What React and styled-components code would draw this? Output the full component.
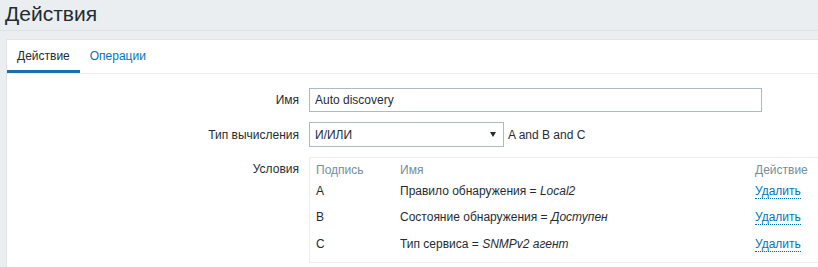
import React from "react";
import styled, { createGlobalStyle } from "styled-components";

const Global = createGlobalStyle`
  html, body { margin: 0; padding: 0; overflow: hidden; }
  body {
    background: #ebeef0;
    font-family: "Liberation Sans", Arial, sans-serif;
    font-size: 12px;
    color: #1f2c33;
  }
`;

const Page = styled.div`
  width: 818px;
  height: 267px;
  overflow: hidden;
`;

const Header = styled.header`
  height: 31px;
  border-bottom: 1px solid #dde2e5;
  padding-left: 5px;
  box-sizing: border-box;
`;

const Title = styled.h1`
  margin: 0;
  font-size: 21px;
  font-weight: normal;
  line-height: 28px;
  color: #1f2c33;
`;

const Panel = styled.section`
  margin: 8px 0 0 6px;
  background: #fff;
  border: 1px solid #dfe4e7;
  border-right: none;
  height: 240px;
  overflow: hidden;
`;

const TabBar = styled.nav`
  display: flex;
  border-bottom: 1px solid #ebeef0;
`;

const Tab = styled.a`
  display: block;
  padding: 9px 10px 7px;
  line-height: 14px;
  border-bottom: 3px solid ${(p) => (p.$active ? "#1b6fae" : "transparent")};
  color: ${(p) => (p.$active ? "#1f2c33" : "#0275b8")};
  text-decoration: none;
  cursor: pointer;
`;

const Form = styled.div`
  padding-top: 14px;
  display: grid;
  grid-template-columns: 292px 1fr;
  column-gap: 10px;
  row-gap: 10px;
  align-items: center;
`;

const Label = styled.label`
  text-align: right;
  line-height: 14px;
  align-self: ${(p) => (p.$top ? "start" : "center")};
  padding-top: ${(p) => (p.$top ? "5px" : "0")};
`;

const TextInput = styled.div`
  width: 453px;
  height: 24px;
  box-sizing: border-box;
  border: 1px solid #acbbc2;
  padding: 0 5px;
  line-height: 22px;
  color: #1f2c33;
`;

const Line = styled.div`
  display: flex;
  align-items: center;
  gap: 4px;
`;

const Select = styled.div`
  width: 195px;
  height: 25px;
  box-sizing: border-box;
  border: 1px solid #acbbc2;
  padding: 0 5px;
  display: flex;
  align-items: center;
  justify-content: space-between;
`;

const Arrow = styled.span`
  width: 0;
  height: 0;
  border-left: 3.5px solid transparent;
  border-right: 3.5px solid transparent;
  border-top: 5px solid #1f2c33;
  margin-right: 2px;
`;

const CondBox = styled.div`
  width: 540px;
  border: 1px solid #ebeef0;
  padding: 0 6px 5px;
  box-sizing: border-box;
`;

const Table = styled.table`
  border-collapse: collapse;
  width: 100%;
`;

const Th = styled.th`
  text-align: left;
  font-weight: normal;
  color: #768d99;
  height: 20px;
  padding: 5px 0 1px;
  line-height: 14px;
  box-sizing: border-box;
  width: ${(p) => p.$w || "auto"};
  vertical-align: top;
`;

const Td = styled.td`
  height: ${(p) => p.$h || 26}px;
  padding: 0;
  line-height: 14px;
  vertical-align: middle;
`;

const Val = styled.i`
  font-style: italic;
`;

const Link = styled.a`
  color: #0275b8;
  text-decoration: none;
  border-bottom: 1px dotted #0275b8;
  cursor: pointer;
`;

const rows = [
  { l: "A", n: "Правило обнаружения = ", v: "Local2", h: 26 },
  { l: "B", n: "Состояние обнаружения = ", v: "Доступен", h: 26 },
  { l: "C", n: "Тип сервиса = ", v: "SNMPv2 агент", h: 27 },
];

export default function App() {
  return (
    <Page>
      <Global />
      <Header>
        <Title>Действия</Title>
      </Header>
      <Panel>
        <TabBar>
          <Tab $active>Действие</Tab>
          <Tab>Операции</Tab>
        </TabBar>
        <Form>
          <Label>Имя</Label>
          <TextInput>Auto discovery</TextInput>
          <Label>Тип вычисления</Label>
          <Line>
            <Select>
              <span>И/ИЛИ</span>
              <Arrow />
            </Select>
            <span>A and B and C</span>
          </Line>
          <Label $top>Условия</Label>
          <CondBox>
            <Table>
              <thead>
                <tr>
                  <Th $w="84px">Подпись</Th>
                  <Th $w="355px">Имя</Th>
                  <Th>Действие</Th>
                </tr>
              </thead>
              <tbody>
                {rows.map((r) => (
                  <tr key={r.l}>
                    <Td $h={r.h}>{r.l}</Td>
                    <Td $h={r.h}>
                      {r.n}
                      <Val>{r.v}</Val>
                    </Td>
                    <Td $h={r.h}>
                      <Link>Удалить</Link>
                    </Td>
                  </tr>
                ))}
              </tbody>
            </Table>
          </CondBox>
        </Form>
      </Panel>
    </Page>
  );
}
